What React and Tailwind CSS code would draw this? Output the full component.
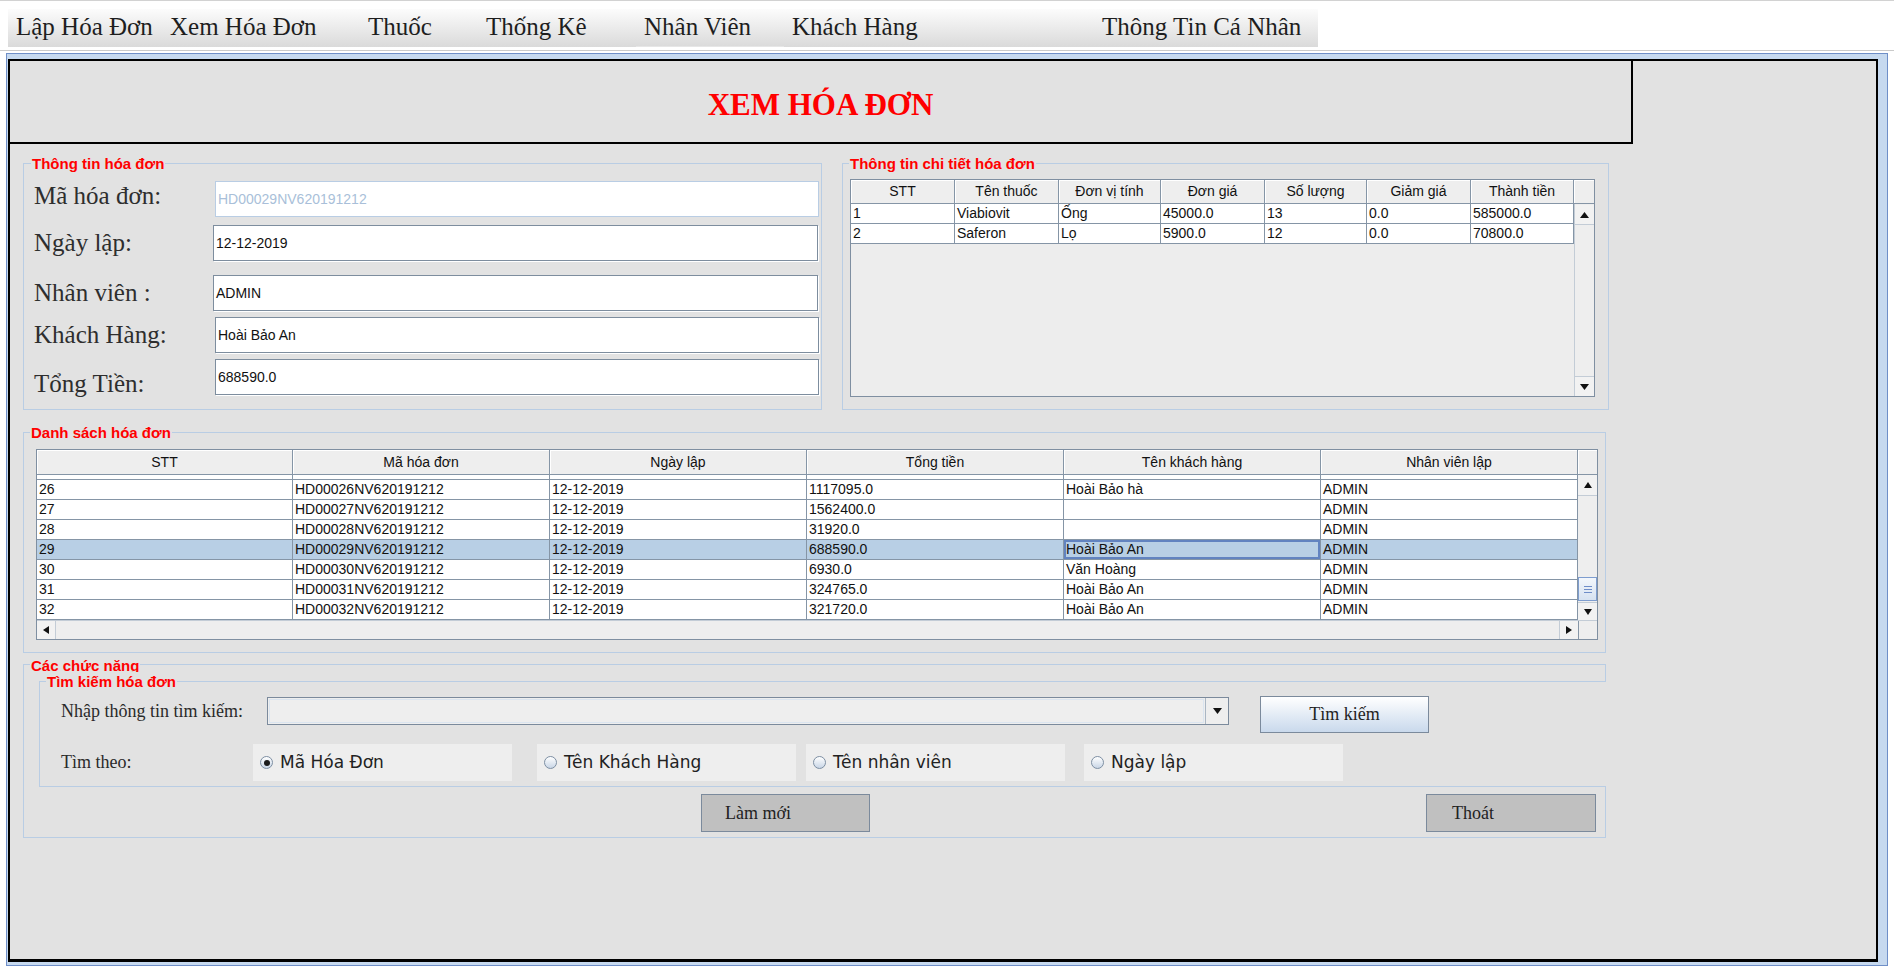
import React from "react";

const serif = "font-['Liberation_Serif','Times_New_Roman',serif]";
const sans = "font-['Liberation_Sans',Arial,sans-serif]";
const deja = "font-['DejaVu_Sans',sans-serif]";

const menu = [
  { t: "Lập Hóa Đơn", w: "w-[154px]" },
  { t: "Xem Hóa Đơn", w: "w-[198px]" },
  { t: "Thuốc", w: "w-[118px]" },
  { t: "Thống Kê", w: "w-[158px]" },
  { t: "Nhân Viên", w: "w-[148px]", hl: true },
  { t: "Khách Hàng", w: "w-[310px]" },
  { t: "Thông Tin Cá Nhân", w: "w-[224px]" },
];

function Tri({ dir, size = 8 }) {
  const h = Math.round(size * 0.7);
  let d;
  if (dir === "up") d = `M0 ${h} L${size / 2} 0 L${size} ${h} Z`;
  else if (dir === "down") d = `M0 0 L${size} 0 L${size / 2} ${h} Z`;
  if (dir === "up" || dir === "down")
    return (
      <svg width={size} height={h} viewBox={`0 0 ${size} ${h}`}>
        <path d={d} fill="#111" />
      </svg>
    );
  const w = h;
  d = dir === "left" ? `M${w} 0 L0 ${size / 2} L${w} ${size} Z` : `M0 0 L${w} ${size / 2} L0 ${size} Z`;
  return (
    <svg width={w} height={size} viewBox={`0 0 ${w} ${size}`}>
      <path d={d} fill="#111" />
    </svg>
  );
}

function Group({ title, className, legendClass, children }) {
  return (
    <fieldset className={`border border-[#b9cde4] min-w-0 shrink-0 ${className}`}>
      <legend className={`px-[1px] text-[15px] leading-[17px] font-bold text-[#ff0000] ${sans} ${legendClass}`}>{title}</legend>
      {children}
    </fieldset>
  );
}

function Field({ value, w, disabled }) {
  return (
    <div
      className={`${w} h-[36px] bg-white flex items-center pl-[2px] text-[14px] ${sans} ${
        disabled
          ? "border border-[#b9cde4] text-[#a9bfd9]"
          : "border border-[#7d8d9e] text-[#111] shadow-[1px_1px_0_#ffffff]"
      }`}
    >
      {value}
    </div>
  );
}

const rows2 = [
  ["1", "Viabiovit", "Ống", "45000.0", "13", "0.0", "585000.0"],
  ["2", "Saferon", "Lọ", "5900.0", "12", "0.0", "70800.0"],
];
const heads2 = ["STT", "Tên thuốc", "Đơn vị tính", "Đơn giá", "Số lượng", "Giảm giá", "Thành tiền"];
const cols2 = ["w-[104px]", "w-[104px]", "w-[102px]", "w-[104px]", "w-[102px]", "w-[104px]", "w-[103px]"];

const heads3 = ["STT", "Mã hóa đơn", "Ngày lập", "Tổng tiền", "Tên khách hàng", "Nhân viên lập"];
const cols3 = ["w-[256px]", "w-[257px]", "w-[257px]", "w-[257px]", "w-[257px]", "w-[257px]"];
const rows3 = [
  ["26", "HD00026NV620191212", "12-12-2019", "1117095.0", "Hoài Bảo hà", "ADMIN"],
  ["27", "HD00027NV620191212", "12-12-2019", "1562400.0", "", "ADMIN"],
  ["28", "HD00028NV620191212", "12-12-2019", "31920.0", "", "ADMIN"],
  ["29", "HD00029NV620191212", "12-12-2019", "688590.0", "Hoài Bảo An", "ADMIN"],
  ["30", "HD00030NV620191212", "12-12-2019", "6930.0", "Văn Hoàng", "ADMIN"],
  ["31", "HD00031NV620191212", "12-12-2019", "324765.0", "Hoài Bảo An", "ADMIN"],
  ["32", "HD00032NV620191212", "12-12-2019", "321720.0", "Hoài Bảo An", "ADMIN"],
];

function Radio({ label, checked, className }) {
  return (
    <div className={`w-[259px] h-[37px] bg-[#eeeeee] flex items-center pl-[7px] shrink-0 ${className}`}>
      <span className="w-[13px] h-[13px] rounded-full border border-[#7d8fa3] bg-gradient-to-b from-white to-[#c9d6e6] flex items-center justify-center">
        {checked && <span className="w-[6px] h-[6px] rounded-full bg-[#1a1a1a]" />}
      </span>
      <span className={`ml-[7px] text-[17px] leading-[21px] text-[#222] ${deja}`}>{label}</span>
    </div>
  );
}

export default function App() {
  return (
    <div className={`w-[1894px] h-[970px] bg-white overflow-hidden flex flex-col ${serif}`}>
      <div className="h-[1px] bg-[#d2d2d2] shrink-0" />
      <div className="h-[8px] shrink-0" />
      <div className="ml-[8px] w-[1310px] h-[38px] flex shrink-0 bg-gradient-to-b from-[#fcfcfc] to-[#dadada]">
        {menu.map((m) => (
          <div
            key={m.t}
            className={`${m.w} h-full flex items-center pl-[8px] pb-[3px] text-[25px] leading-[29px] text-[#1e1e1e] whitespace-nowrap ${
              m.hl ? "border-b border-[#e6e6e6]" : ""
            }`}
          >
            {m.t}
          </div>
        ))}
      </div>
      <div className="h-[3px] shrink-0" />
      <div className="h-[1px] bg-[#cacaca] shrink-0" />
      <div className="h-[2px] shrink-0" />
      <div className="ml-[6px] w-[1882px] h-[913px] border border-[#6f8fc8] bg-[#c6d9ef] pt-[5px] pl-[1px] pb-[3px] pr-[9px] shrink-0">
        <div className="w-[1870px] h-[903px] border-t-2 border-l-2 border-r-2 border-b-[3px] border-black bg-[#e2e2e2] flex flex-col">
          {/* Title */}
          <div className="w-[1623px] h-[83px] shrink-0 border-r-2 border-b-2 border-black flex items-center justify-center pt-[6px]">
            <span className="text-[31px] leading-[36px] font-bold text-[#ff0000]">XEM HÓA ĐƠN</span>
          </div>

          <div className="pl-[13px] flex flex-col">
            {/* top two groups */}
            <div className="flex mt-[11px]">
              <Group title="Thông tin hóa đơn" className="w-[799px] h-[255px]" legendClass="ml-[7px]">
                <div className="flex flex-col pl-[10px]">
                  <div className="flex items-start mt-[9px] h-[36px]">
                    <div className="w-[181px] text-[25px] leading-[29px] text-[#2e2e2e]">Mã hóa đơn:</div>
                    <Field value="HD00029NV620191212" w="w-[604px]" disabled />
                  </div>
                  <div className="flex items-start mt-[8px] h-[36px]">
                    <div className="w-[179px] pt-[3px] text-[25px] leading-[29px] text-[#2e2e2e]">Ngày lập:</div>
                    <Field value="12-12-2019" w="w-[605px]" />
                  </div>
                  <div className="flex items-start mt-[14px] h-[36px]">
                    <div className="w-[179px] pt-[3px] text-[25px] leading-[29px] text-[#2e2e2e]">Nhân viên :</div>
                    <Field value="ADMIN" w="w-[605px]" />
                  </div>
                  <div className="flex items-start mt-[6px] h-[36px]">
                    <div className="w-[181px] pt-[3px] text-[25px] leading-[29px] text-[#2e2e2e]">Khách Hàng:</div>
                    <Field value="Hoài Bảo An" w="w-[604px]" />
                  </div>
                  <div className="flex items-start mt-[6px] h-[36px]">
                    <div className="w-[181px] pt-[10px] text-[25px] leading-[29px] text-[#2e2e2e]">Tổng Tiền:</div>
                    <Field value="688590.0" w="w-[604px]" />
                  </div>
                </div>
              </Group>

              <Group title="Thông tin chi tiết hóa đơn" className="ml-[20px] w-[767px] h-[255px]" legendClass="ml-[6px]">
                <div className={`ml-[7px] mt-[7px] w-[745px] h-[218px] border border-[#7f8fa1] flex flex-col ${sans}`}>
                  <div className="flex h-[24px] shrink-0">
                    {heads2.map((h, i) => (
                      <div
                        key={h}
                        className={`${cols2[i]} h-full bg-[#eeeeee] border-r border-b border-[#8595a6] shadow-[inset_1px_1px_0_#ffffff] flex items-center justify-center text-[14px] text-[#111]`}
                      >
                        {h}
                      </div>
                    ))}
                    <div className="w-[20px] h-full bg-[#eeeeee] border-b border-[#8595a6] shadow-[inset_1px_1px_0_#ffffff]" />
                  </div>
                  <div className="flex flex-1">
                    <div className="w-[723px] h-full bg-[#ededed] flex flex-col">
                      {rows2.map((r) => (
                        <div key={r[0]} className="flex h-[20px] shrink-0">
                          {r.map((c, i) => (
                            <div
                              key={i}
                              className={`${cols2[i]} h-full bg-white border-r border-b border-[#8595a6] pl-[2px] text-[14px] leading-[19px] text-[#111] whitespace-nowrap overflow-hidden`}
                            >
                              {c}
                            </div>
                          ))}
                        </div>
                      ))}
                    </div>
                    <div className="w-[20px] h-full flex flex-col bg-[#eeeeee] border-l border-[#c3ccd6]">
                      <div className="h-[20px] mt-[1px] flex items-center justify-center border-b border-[#c3ccd6] bg-[#f2f2f2]">
                        <Tri dir="up" size={9} />
                      </div>
                      <div className="flex-1" />
                      <div className="h-[20px] flex items-center justify-center border-t border-[#c3ccd6] bg-[#f2f2f2]">
                        <Tri dir="down" size={9} />
                      </div>
                    </div>
                  </div>
                </div>
              </Group>
            </div>

            {/* Danh sách hóa đơn */}
            <Group title="Danh sách hóa đơn" className="mt-[14px] w-[1583px] h-[229px]" legendClass="ml-[6px]">
              <div className={`ml-[12px] mt-[8px] w-[1562px] h-[191px] border border-[#7f8fa1] flex flex-col ${sans}`}>
                <div className="flex h-[25px] shrink-0">
                  {heads3.map((h, i) => (
                    <div
                      key={h}
                      className={`${cols3[i]} h-full bg-[#eeeeee] border-r border-b border-[#8595a6] shadow-[inset_1px_1px_0_#ffffff] flex items-center justify-center text-[14px] text-[#111]`}
                    >
                      {h}
                    </div>
                  ))}
                  <div className="w-[19px] h-full bg-[#eeeeee] border-b border-[#8595a6] shadow-[inset_1px_1px_0_#ffffff]" />
                </div>
                <div className="flex h-[145px] shrink-0">
                  <div className="w-[1541px] h-full flex flex-col bg-white">
                    <div className="flex h-[5px] shrink-0">
                      {cols3.map((c, i) => (
                        <div key={i} className={`${c} h-full border-r border-b border-[#8595a6]`} />
                      ))}
                    </div>
                    {rows3.map((r) => {
                      const sel = r[0] === "29";
                      return (
                        <div key={r[0]} className={`flex h-[20px] shrink-0 ${sel ? "bg-[#b8cfe5]" : "bg-white"}`}>
                          {r.map((c, i) => (
                            <div
                              key={i}
                              className={`${cols3[i]} h-full border-r border-b border-[#8595a6] pl-[2px] text-[14px] leading-[19px] text-[#111] whitespace-nowrap overflow-hidden ${
                                sel && i === 4 ? "shadow-[inset_0_0_0_2px_#6283c0]" : ""
                              }`}
                            >
                              {c}
                            </div>
                          ))}
                        </div>
                      );
                    })}
                  </div>
                  <div className="w-[19px] h-full flex flex-col bg-[#eeeeee]">
                    <div className="h-[21px] shrink-0 flex items-center justify-center border-b border-[#c3ccd6] bg-[#f2f2f2]">
                      <Tri dir="up" size={8} />
                    </div>
                    <div className="h-[81px] shrink-0" />
                    <div className="h-[24px] shrink-0 border border-[#7e9dcf] bg-gradient-to-b from-[#f3f7fc] to-[#d6e2f1] flex flex-col items-center justify-center gap-[2px]">
                      <div className="w-[8px] h-[1px] bg-[#6e8dc8]" />
                      <div className="w-[8px] h-[1px] bg-[#6e8dc8]" />
                      <div className="w-[8px] h-[1px] bg-[#6e8dc8]" />
                    </div>
                    <div className="h-[1px] shrink-0" />
                    <div className="h-[18px] shrink-0 flex items-center justify-center border-t border-[#c3ccd6] bg-[#f2f2f2]">
                      <Tri dir="down" size={8} />
                    </div>
                  </div>
                </div>
                <div className="flex h-[19px] shrink-0 bg-[#eeeeee] border-t border-[#c3ccd6]">
                  <div className="w-[19px] h-full flex items-center justify-center border-r border-[#c3ccd6] bg-[#f2f2f2]">
                    <Tri dir="left" size={8} />
                  </div>
                  <div className="flex-1" />
                  <div className="w-[19px] h-full flex items-center justify-center border-l border-[#c3ccd6] bg-[#f2f2f2]">
                    <Tri dir="right" size={8} />
                  </div>
                  <div className="w-[19px] h-full bg-[#eeeeee] border-l border-[#8595a6]" />
                </div>
              </div>
            </Group>

            {/* Các chức năng */}
            <Group title="Các chức năng" className="mt-[4px] w-[1583px] h-[181px]" legendClass="ml-[6px] h-[15px] overflow-hidden">
              <fieldset className="ml-[15px] mt-[1px] w-[1567px] h-[114px] min-w-0 border-t border-l border-b border-[#b9cde4] bg-[#e2e2e2]">
                <legend className={`ml-[6px] px-[1px] text-[15px] leading-[17px] font-bold text-[#ff0000] ${sans}`}>Tìm kiếm hóa đơn</legend>
                <div className="flex items-start mt-[6px] pl-[21px]">
                  <div className="w-[206px] h-[28px] mt-[1px] flex items-center text-[18px] text-[#2a2a2a] whitespace-nowrap">
                    Nhập thông tin tìm kiếm:
                  </div>
                  <div className="w-[962px] h-[28px] mt-[1px] border border-[#7b8a9c] bg-[#eeeeee] flex">
                    <div className="flex-1 m-[1px] border border-[#dbe5f0]" />
                    <div className="w-[23px] h-full border-l border-[#aab6c3] bg-[#eeeeee] flex items-center justify-center">
                      <Tri dir="down" size={9} />
                    </div>
                  </div>
                  <div className="ml-[31px] w-[169px] h-[37px] border border-[#7b8a9c] bg-gradient-to-b from-[#ffffff] to-[#c9d9ec] flex items-center justify-center text-[18px] text-[#222]">
                    Tìm kiếm
                  </div>
                </div>
                <div className="flex items-center mt-[11px] pl-[21px]">
                  <div className="w-[192px] text-[18px] text-[#2a2a2a]">Tìm theo:</div>
                  <Radio label="Mã Hóa Đơn" checked />
                  <Radio label="Tên Khách Hàng" className="ml-[25px]" />
                  <Radio label="Tên nhân viên" className="ml-[10px]" />
                  <Radio label="Ngày lập" className="ml-[19px]" />
                </div>
              </fieldset>
              <div className="flex mt-[7px] pl-[677px]">
                <div className="w-[169px] h-[38px] border border-[#7b8a9c] bg-[#c0c0c0] flex items-center pl-[23px] text-[18px] text-[#222]">
                  Làm mới
                </div>
                <div className="ml-[556px] w-[170px] h-[38px] border border-[#7b8a9c] bg-[#c0c0c0] flex items-center pl-[25px] text-[18px] text-[#222]">
                  Thoát
                </div>
              </div>
            </Group>
          </div>
        </div>
      </div>
    </div>
  );
}
